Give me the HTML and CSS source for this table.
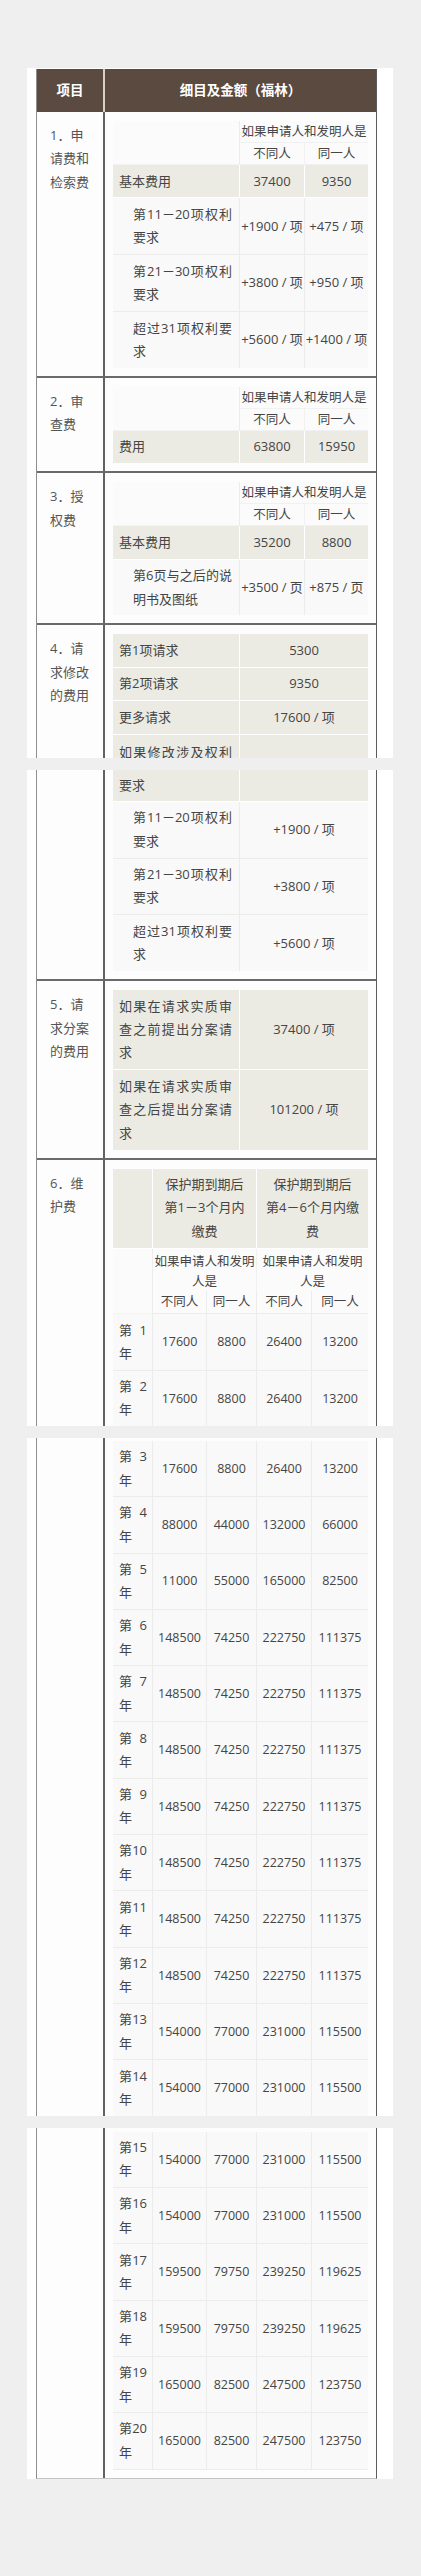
FILE: index.html
```html
<!DOCTYPE html>
<html lang="zh-CN">
<head>
<meta charset="utf-8">
<title>费用表</title>
<link rel="stylesheet" href="styles.css">
</head>
<body>
<div class="page">

  <div class="card card-first">
    <div class="main">
      <div class="hd hd-item">项目</div>
      <div class="hd">细目及金额（福林）</div>

      <div class="item">1．申请费和检索费</div>
      <div class="detail">
        <div class="sub g3">
          <div class="cell blank r2"></div>
          <div class="cell shd s2 e">如果申请人和发明人是</div>
          <div class="cell shd">不同人</div>
          <div class="cell shd e">同一人</div>
          <div class="cell lbl sh">基本费用</div>
          <div class="cell sh">37400</div>
          <div class="cell sh e">9350</div>
          <div class="cell lbl ind">第11－20项权利要求</div>
          <div class="cell">+1900 / 项</div>
          <div class="cell e">+475 / 项</div>
          <div class="cell lbl ind">第21－30项权利要求</div>
          <div class="cell">+3800 / 项</div>
          <div class="cell e">+950 / 项</div>
          <div class="cell lbl ind nb">超过31项权利要求</div>
          <div class="cell nb">+5600 / 项</div>
          <div class="cell e nb">+1400 / 项</div>
        </div>
      </div>

      <div class="item top">2．审查费</div>
      <div class="detail top">
        <div class="sub g3">
          <div class="cell blank r2"></div>
          <div class="cell shd s2 e">如果申请人和发明人是</div>
          <div class="cell shd">不同人</div>
          <div class="cell shd e">同一人</div>
          <div class="cell lbl sh nb">费用</div>
          <div class="cell sh nb">63800</div>
          <div class="cell sh e nb">15950</div>
        </div>
      </div>

      <div class="item top">3．授权费</div>
      <div class="detail top">
        <div class="sub g3">
          <div class="cell blank r2"></div>
          <div class="cell shd s2 e">如果申请人和发明人是</div>
          <div class="cell shd">不同人</div>
          <div class="cell shd e">同一人</div>
          <div class="cell lbl sh">基本费用</div>
          <div class="cell sh">35200</div>
          <div class="cell sh e">8800</div>
          <div class="cell lbl ind nb">第6页与之后的说明书及图纸</div>
          <div class="cell nb">+3500 / 页</div>
          <div class="cell e nb">+875 / 页</div>
        </div>
      </div>

      <div class="item top">4．请求修改的费用</div>
      <div class="detail top cut-bottom">
        <div class="sub g2">
          <div class="cell lbl sh">第1项请求</div>
          <div class="cell sh e">5300</div>
          <div class="cell lbl sh">第2项请求</div>
          <div class="cell sh e">9350</div>
          <div class="cell lbl sh">更多请求</div>
          <div class="cell sh e">17600 / 项</div>
          <div class="cell lbl sh jl part-a nb">如果修改涉及权利</div>
          <div class="cell sh e part-a nb"></div>
        </div>
      </div>
    </div>
  </div>

  <div class="card">
    <div class="main">
      <div class="item"></div>
      <div class="detail cut-top">
        <div class="sub g2">
          <div class="cell lbl sh part-b">要求</div>
          <div class="cell sh e part-b"></div>
          <div class="cell lbl ind">第11－20项权利要求</div>
          <div class="cell e">+1900 / 项</div>
          <div class="cell lbl ind">第21－30项权利要求</div>
          <div class="cell e">+3800 / 项</div>
          <div class="cell lbl ind nb">超过31项权利要求</div>
          <div class="cell e nb">+5600 / 项</div>
        </div>
      </div>

      <div class="item top">5．请求分案的费用</div>
      <div class="detail top">
        <div class="sub g2">
          <div class="cell lbl sh">如果在请求实质审查之前提出分案请求</div>
          <div class="cell sh e">37400 / 项</div>
          <div class="cell lbl sh nb">如果在请求实质审查之后提出分案请求</div>
          <div class="cell sh e nb">101200 / 项</div>
        </div>
      </div>

      <div class="item top">6．维护费</div>
      <div class="detail top cut-bottom">
        <div class="sub g6">
          <div class="cell sh"></div>
          <div class="cell sh s2 ph">保护期到期后<br>第1－3个月内<br>缴费</div>
          <div class="cell sh s2 e ph">保护期到期后<br>第4－6个月内缴<br>费</div>
          <div class="cell blank r2"></div>
          <div class="cell shd2 s2">如果申请人和发明<br>人是</div>
          <div class="cell shd2 s2 e">如果申请人和发明<br>人是</div>
          <div class="cell shd3">不同人</div>
          <div class="cell shd3">同一人</div>
          <div class="cell shd3">不同人</div>
          <div class="cell shd3 e">同一人</div>

          <div class="cell yl">第1年</div><div class="cell yv">17600</div><div class="cell yv">8800</div><div class="cell yv">26400</div><div class="cell yv e">13200</div>
          <div class="cell yl nb">第2年</div><div class="cell yv nb">17600</div><div class="cell yv nb">8800</div><div class="cell yv nb">26400</div><div class="cell yv e nb">13200</div>
        </div>
      </div>
    </div>
  </div>

  <div class="card">
    <div class="main">
      <div class="item"></div>
      <div class="detail cut-top cut-bottom pt3">
        <div class="sub g6">
          <div class="cell yl">第3年</div><div class="cell yv">17600</div><div class="cell yv">8800</div><div class="cell yv">26400</div><div class="cell yv e">13200</div>
          <div class="cell yl">第4年</div><div class="cell yv">88000</div><div class="cell yv">44000</div><div class="cell yv">132000</div><div class="cell yv e">66000</div>
          <div class="cell yl">第5年</div><div class="cell yv">11000</div><div class="cell yv">55000</div><div class="cell yv">165000</div><div class="cell yv e">82500</div>
          <div class="cell yl">第6年</div><div class="cell yv">148500</div><div class="cell yv">74250</div><div class="cell yv">222750</div><div class="cell yv e">111375</div>
          <div class="cell yl">第7年</div><div class="cell yv">148500</div><div class="cell yv">74250</div><div class="cell yv">222750</div><div class="cell yv e">111375</div>
          <div class="cell yl">第8年</div><div class="cell yv">148500</div><div class="cell yv">74250</div><div class="cell yv">222750</div><div class="cell yv e">111375</div>
          <div class="cell yl">第9年</div><div class="cell yv">148500</div><div class="cell yv">74250</div><div class="cell yv">222750</div><div class="cell yv e">111375</div>
          <div class="cell yl">第10年</div><div class="cell yv">148500</div><div class="cell yv">74250</div><div class="cell yv">222750</div><div class="cell yv e">111375</div>
          <div class="cell yl">第11年</div><div class="cell yv">148500</div><div class="cell yv">74250</div><div class="cell yv">222750</div><div class="cell yv e">111375</div>
          <div class="cell yl">第12年</div><div class="cell yv">148500</div><div class="cell yv">74250</div><div class="cell yv">222750</div><div class="cell yv e">111375</div>
          <div class="cell yl">第13年</div><div class="cell yv">154000</div><div class="cell yv">77000</div><div class="cell yv">231000</div><div class="cell yv e">115500</div>
          <div class="cell yl nb">第14年</div><div class="cell yv nb">154000</div><div class="cell yv nb">77000</div><div class="cell yv nb">231000</div><div class="cell yv e nb">115500</div>
        </div>
      </div>
    </div>
  </div>

  <div class="card card-last">
    <div class="main">
      <div class="item"></div>
      <div class="detail cut-top pt4">
        <div class="sub g6">
          <div class="cell yl">第15年</div><div class="cell yv">154000</div><div class="cell yv">77000</div><div class="cell yv">231000</div><div class="cell yv e">115500</div>
          <div class="cell yl">第16年</div><div class="cell yv">154000</div><div class="cell yv">77000</div><div class="cell yv">231000</div><div class="cell yv e">115500</div>
          <div class="cell yl">第17年</div><div class="cell yv">159500</div><div class="cell yv">79750</div><div class="cell yv">239250</div><div class="cell yv e">119625</div>
          <div class="cell yl">第18年</div><div class="cell yv">159500</div><div class="cell yv">79750</div><div class="cell yv">239250</div><div class="cell yv e">119625</div>
          <div class="cell yl">第19年</div><div class="cell yv">165000</div><div class="cell yv">82500</div><div class="cell yv">247500</div><div class="cell yv e">123750</div>
          <div class="cell yl">第20年</div><div class="cell yv">165000</div><div class="cell yv">82500</div><div class="cell yv">247500</div><div class="cell yv e">123750</div>
        </div>
      </div>
    </div>
  </div>

</div>
</body>
</html>
```

FILE: styles.css
```css
html, body {
  margin: 0;
  padding: 0;
  background: #efefef;
}

body {
  font-family: "Open Sans", "Noto Sans CJK SC", sans-serif;
  font-size: 13px;
  line-height: 23.4px;
  color: #454545;
}

.page {
  padding: 68px 0 99px 27px;
}

.card {
  width: 366px;
  background: #ffffff;
  padding: 0 16px 0 9px;
  box-sizing: border-box;
  margin-bottom: 12px;
}

.card-first {
  padding-top: 1px;
}

.main {
  display: grid;
  grid-template-columns: 68px 271px;
  width: 341px;
  box-sizing: border-box;
  border-left: 1px solid #8e8e8e;
  border-right: 1px solid #5c5c5c;
  background: #fdfdfd;
}

.card-last .main {
  border-bottom: 1px solid #c4c4c4;
}

.hd {
  background: #5b4a3f;
  color: #ffffff;
  font-weight: 700;
  font-size: 13.5px;
  height: 43px;
  display: flex;
  align-items: center;
  justify-content: center;
}

.hd-item {
  border-right: 2px solid #d8cfc5;
}

.item {
  border-right: 2px solid #626262;
  padding: 12px 10px 0 13px;
  color: #555555;
}

.detail {
  padding: 9px 8px 8px;
}

.top {
  border-top: 2px solid #6a6a6a;
}

.cut-bottom {
  padding-bottom: 0;
}

.cut-top {
  padding-top: 0;
}

.pt3 {
  padding-top: 3px;
}

.pt4 {
  padding-top: 4px;
}

.sub {
  display: grid;
}

.g3 {
  grid-template-columns: 127px 65px 63px;
}

.g2 {
  grid-template-columns: 127px 128px;
}

.g6 {
  grid-template-columns: 40px 54px 50px 55px 56px;
}

.cell {
  box-sizing: border-box;
  padding: 4.5px 1px;
  display: flex;
  align-items: center;
  justify-content: center;
  text-align: center;
  white-space: nowrap;
  background: #f9f9f9;
  border-right: 1px solid #ececec;
  border-bottom: 1px solid #ececec;
}

.e {
  border-right: none;
}

.nb {
  border-bottom: none;
}

.s2 {
  grid-column: span 2;
}

.r2 {
  grid-row: span 2;
}

.blank {
  background: #fbfbfb;
  border-bottom-color: #f3f3f3;
}

.lbl {
  display: block;
  white-space: normal;
  text-align: justify;
  padding: 4.5px 7px 4.5px 6px;
}

.ind {
  padding-left: 20px;
}

.jl {
  text-align-last: justify;
}

.sh {
  background: #ecebe3;
  border-color: #ffffff;
}

.shd {
  font-size: 12.5px;
  line-height: 21px;
  padding: 0 1px;
  background: #fbfbfb;
  border-color: #f1f1f1;
}

.shd2 {
  font-size: 12.5px;
  line-height: 19.5px;
  padding: 3.5px 0 0;
  background: #fbfbfb;
  border-bottom: none;
  border-color: #f1f1f1;
  align-items: flex-start;
}

.shd3 {
  font-size: 12.5px;
  line-height: 22px;
  padding: 0;
  background: #fbfbfb;
  border-color: #ececec;
}

.ph {
  padding: 4.5px 0;
}

.part-a {
  height: 23.6px;
  overflow: hidden;
  padding-top: 6px;
  padding-bottom: 0;
  align-items: flex-start;
}

.part-b {
  padding-top: 4px;
  padding-bottom: 3px;
}

.yl {
  display: block;
  white-space: normal;
  text-align: justify;
  padding: 4.25px 5px 4.25px 6px;
}

.yv {
  font-size: 12.5px;
  padding-top: 4.25px;
  padding-bottom: 4.25px;
}
```
